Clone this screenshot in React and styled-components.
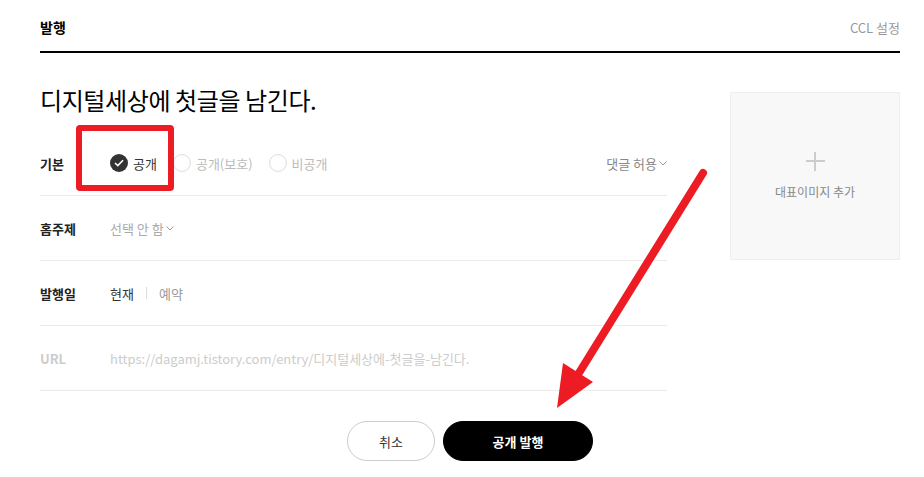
import React from "react";
import styled, { createGlobalStyle } from "styled-components";

const GlobalStyle = createGlobalStyle`
    body {
        margin: 0;
        background: #fff;
        font-family: "Noto Sans CJK KR", "Noto Sans", sans-serif;
        color: #333;
    }
`;

const visibility = [
    { label: "공개", checked: true },
    { label: "공개(보호)" },
    { label: "비공개" },
];

const Chevron = () => (
    <svg width="8" height="5" viewBox="0 0 8 5">
        <path d="M0.5 0.5 L4 4 L7.5 0.5" fill="none" stroke="#999" strokeWidth="1" />
    </svg>
);

const App = () => {
    return (
        <Page>
            <GlobalStyle />
            <Header>
                <h2>발행</h2>
                <span>CCL 설정</span>
            </Header>
            <Body>
                <Left>
                    <Title>디지털세상에 첫글을 남긴다.</Title>
                    <Row>
                        <Label>기본</Label>
                        <Options>
                            {visibility.map((v) => (
                                <Option key={v.label} checked={v.checked}>
                                    <Radio checked={v.checked}>
                                        {v.checked && (
                                            <svg width="10" height="8" viewBox="0 0 10 8">
                                                <path d="M1 4 L3.8 6.6 L9 1.2" fill="none" stroke="#fff" strokeWidth="1.6" />
                                            </svg>
                                        )}
                                    </Radio>
                                    {v.label}
                                </Option>
                            ))}
                        </Options>
                        <Select right>
                            댓글 허용 <Chevron />
                        </Select>
                    </Row>
                    <Row>
                        <Label>홈주제</Label>
                        <Select>
                            선택 안 함<Chevron />
                        </Select>
                    </Row>
                    <Row>
                        <Label>발행일</Label>
                        <Tab active>현재</Tab>
                        <Divider />
                        <Tab>예약</Tab>
                    </Row>
                    <Row>
                        <Label muted>URL</Label>
                        <Url>https://dagamj.tistory.com/entry/디지털세상에-첫글을-남긴다.</Url>
                    </Row>
                </Left>
                <ImageBox>
                    <Plus />
                    <span>대표이미지 추가</span>
                </ImageBox>
            </Body>
            <Buttons>
                <Button>취소</Button>
                <Button primary>공개 발행</Button>
            </Buttons>
            <Highlight />
            <Arrow width="924" height="477" viewBox="0 0 924 477">
                <line x1="703" y1="173" x2="574" y2="381" stroke="#ed1c24" strokeWidth="8" strokeLinecap="round" />
                <polygon points="557,408 563,363 593,382" fill="#ed1c24" />
            </Arrow>
        </Page>
    );
};

export default App;

const Page = styled.div`
    position: relative;
    width: 924px;
    height: 477px;
    box-sizing: border-box;
    padding: 0 24px 0 40px;
    overflow: hidden;
`;
const Header = styled.div`
    display: flex;
    justify-content: space-between;
    align-items: center;
    height: 53px;
    padding-top: 3px;
    box-sizing: border-box;
    border-bottom: 2px solid #000;
    h2 {
        margin: 0;
        font-size: 14px;
        font-weight: 700;
        color: #000;
    }
    span {
        font-size: 13px;
        color: #999;
    }
`;
const Body = styled.div`
    display: flex;
    align-items: flex-start;
    gap: 63px;
`;
const Left = styled.div`
    width: 627px;
`;
const Title = styled.h1`
    margin: 30px 0 14px;
    font-size: 24px;
    line-height: 34px;
    font-weight: 400;
    color: #000;
    letter-spacing: -0.4px;
`;
const Row = styled.div`
    display: flex;
    align-items: center;
    height: 64px;
    border-bottom: 1px solid #ebebeb;
    font-size: 13px;
`;
const Label = styled.div`
    width: 70px;
    font-weight: 700;
    color: ${({ muted }) => (muted ? "#ccc" : "#222")};
`;
const Options = styled.div`
    display: flex;
    align-items: center;
    gap: 16px;
    flex: 1;
`;
const Option = styled.div`
    display: flex;
    align-items: center;
    gap: 5px;
    color: ${({ checked }) => (checked ? "#333" : "#bbb")};
`;
const Radio = styled.span`
    width: 18px;
    height: 18px;
    box-sizing: border-box;
    border-radius: 50%;
    display: flex;
    align-items: center;
    justify-content: center;
    background: ${({ checked }) => (checked ? "#333" : "#fff")};
    border: ${({ checked }) => (checked ? "none" : "1px solid #ddd")};
`;
const Select = styled.div`
    display: flex;
    align-items: center;
    gap: 2px;
    color: ${({ right }) => (right ? "#888" : "#aaa")};
    margin-left: ${({ right }) => (right ? "auto" : "0")};
`;
const Tab = styled.span`
    color: ${({ active }) => (active ? "#333" : "#999")};
`;
const Divider = styled.span`
    width: 1px;
    height: 12px;
    background: #ddd;
    margin: 0 12px;
`;
const Url = styled.span`
    color: #ccc;
`;
const ImageBox = styled.div`
    width: 170px;
    height: 168px;
    margin-top: 39px;
    box-sizing: border-box;
    background: #f8f8f8;
    border: 1px solid #eee;
    display: flex;
    flex-direction: column;
    align-items: center;
    justify-content: center;
    gap: 10px;
    span {
        font-size: 12px;
        color: #888;
    }
`;
const Plus = styled.div`
    position: relative;
    width: 19px;
    height: 19px;
    margin-bottom: 2px;
    &::before,
    &::after {
        content: "";
        position: absolute;
        background: #ccc;
    }
    &::before {
        left: 0;
        right: 0;
        top: 8px;
        height: 2px;
    }
    &::after {
        top: 0;
        bottom: 0;
        left: 8px;
        width: 2px;
    }
`;
const Buttons = styled.div`
    display: flex;
    justify-content: center;
    gap: 8px;
    margin-top: 30px;
`;
const Button = styled.button`
    width: ${({ primary }) => (primary ? "150px" : "88px")};
    height: 40px;
    border-radius: 20px;
    border: 1px solid ${({ primary }) => (primary ? "#000" : "#ccc")};
    background: ${({ primary }) => (primary ? "#000" : "#fff")};
    color: ${({ primary }) => (primary ? "#fff" : "#333")};
    font-family: inherit;
    font-size: 13px;
    font-weight: ${({ primary }) => (primary ? 700 : 400)};
    cursor: pointer;
`;
const Highlight = styled.div`
    position: absolute;
    left: 76px;
    top: 125px;
    width: 98px;
    height: 66px;
    box-sizing: border-box;
    border: 6px solid #ed1c24;
    border-radius: 4px;
`;
const Arrow = styled.svg`
    position: absolute;
    left: 0;
    top: 0;
    pointer-events: none;
`;
